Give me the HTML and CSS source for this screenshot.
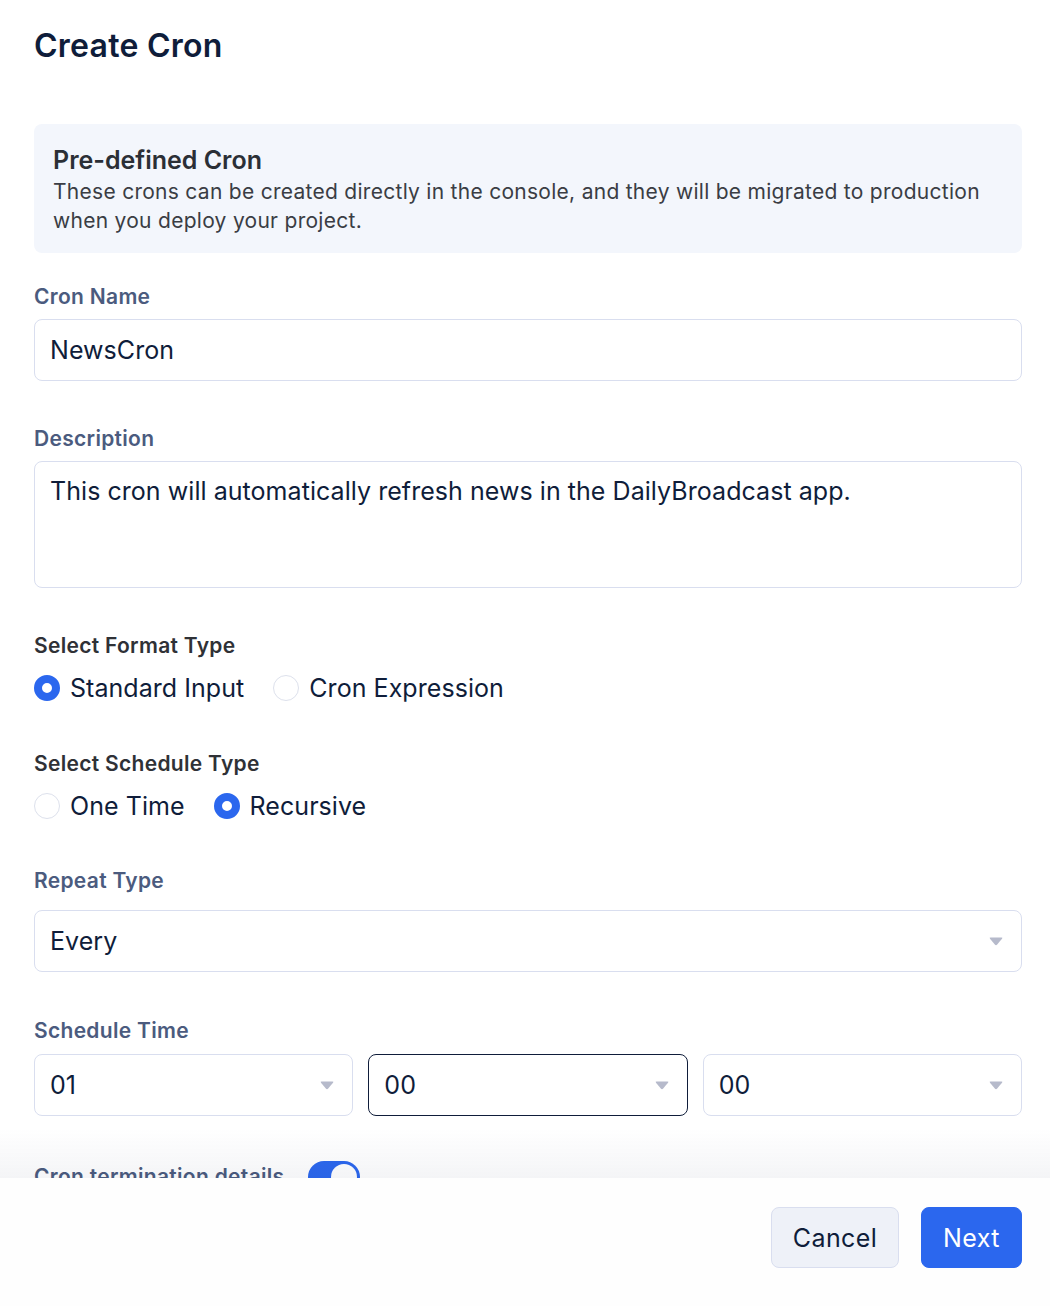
FILE: index.html
```html
<!DOCTYPE html>
<html lang="en">
<head>
<meta charset="utf-8">
<title>Create Cron</title>
<link rel="stylesheet" href="styles.css">
</head>
<body>
<main class="page">
  <h1 class="title">Create Cron</h1>

  <section class="info">
    <h2 class="info-title">Pre-defined Cron</h2>
    <p class="info-text">These crons can be created directly in the console, and they will be migrated to production when you deploy your project.</p>
  </section>

  <div class="field field-name">
    <label class="label">Cron Name</label>
    <div class="input">NewsCron</div>
  </div>

  <div class="field field-desc">
    <label class="label">Description</label>
    <div class="input textarea">This cron will automatically refresh news in the DailyBroadcast app.</div>
  </div>

  <div class="field field-format">
    <div class="label label-dark">Select Format Type</div>
    <div class="radios">
      <span class="radio checked"></span><span class="radio-text">Standard Input</span>
      <span class="radio"></span><span class="radio-text">Cron Expression</span>
    </div>
  </div>

  <div class="field field-schedule">
    <div class="label label-dark">Select Schedule Type</div>
    <div class="radios">
      <span class="radio"></span><span class="radio-text">One Time</span>
      <span class="radio checked"></span><span class="radio-text">Recursive</span>
    </div>
  </div>

  <div class="field field-repeat">
    <label class="label">Repeat Type</label>
    <div class="input select"><span>Every</span>
      <svg class="caret" width="14" height="9" viewBox="0 0 14 9"><path d="M1.5 0.5 H12.5 Q14 0.5 13 1.8 L8.2 7.6 Q7 9 5.8 7.6 L1 1.8 Q0 0.5 1.5 0.5 Z" fill="#b6bacb"/></svg>
    </div>
  </div>

  <div class="field field-time">
    <label class="label">Schedule Time</label>
    <div class="time-row">
      <div class="input select"><span>01</span>
        <svg class="caret" width="14" height="9" viewBox="0 0 14 9"><path d="M1.5 0.5 H12.5 Q14 0.5 13 1.8 L8.2 7.6 Q7 9 5.8 7.6 L1 1.8 Q0 0.5 1.5 0.5 Z" fill="#b6bacb"/></svg>
      </div>
      <div class="input select focused"><span>00</span>
        <svg class="caret" width="14" height="9" viewBox="0 0 14 9"><path d="M1.5 0.5 H12.5 Q14 0.5 13 1.8 L8.2 7.6 Q7 9 5.8 7.6 L1 1.8 Q0 0.5 1.5 0.5 Z" fill="#b6bacb"/></svg>
      </div>
      <div class="input select"><span>00</span>
        <svg class="caret" width="14" height="9" viewBox="0 0 14 9"><path d="M1.5 0.5 H12.5 Q14 0.5 13 1.8 L8.2 7.6 Q7 9 5.8 7.6 L1 1.8 Q0 0.5 1.5 0.5 Z" fill="#b6bacb"/></svg>
      </div>
    </div>
  </div>

  <div class="termination">
    <span class="label">Cron termination details</span>
    <span class="toggle"><span class="knob"></span></span>
  </div>
</main>

<footer class="footer">
  <button class="btn btn-cancel">Cancel</button>
  <button class="btn btn-next">Next</button>
</footer>
</body>
</html>
```

FILE: styles.css
```css
* { box-sizing: border-box; }

html, body {
  margin: 0;
  padding: 0;
  background: #ffffff;
  height: 1306px;
  overflow: hidden;
}

body {
  font-family: Inter, "Noto Sans", "Liberation Sans", sans-serif;
  color: #0f1d3a;
}

.page {
  padding: 26px 28px 0 34px;
  display: flex;
  flex-direction: column;
}

.title {
  margin: 0;
  font-size: 32px;
  line-height: 40px;
  font-weight: 600;
  color: #0f1d3a;
  letter-spacing: 0.25px;
}

.info {
  margin-top: 58px;
  background: #f3f6fc;
  border-radius: 8px;
  padding: 21px 19px 18px 19px;
}

.info-title {
  margin: 0;
  font-size: 25px;
  line-height: 30px;
  font-weight: 600;
  color: #2b2f36;
}

.info-text {
  margin: 2px 0 0 0;
  font-size: 21px;
  line-height: 29px;
  letter-spacing: 0.28px;
  color: #3a3d44;
}

.field { display: flex; flex-direction: column; }
.field-name { margin-top: 32px; }
.field-desc { margin-top: 46px; }
.field-format { margin-top: 46px; }
.field-schedule { margin-top: 49px; }
.field-repeat { margin-top: 48px; }
.field-time { margin-top: 47px; }

.label {
  font-size: 21px;
  line-height: 24px;
  font-weight: 600;
  letter-spacing: 0.3px;
  color: #4b5b7e;
}

.label-dark { color: #2f3136; }

.field .input { margin-top: 10px; }
.field-repeat .input { margin-top: 17px; }

.input {
  height: 62px;
  border: 1px solid #d9deef;
  border-radius: 8px;
  padding: 0 15px;
  display: flex;
  align-items: center;
  font-size: 25px;
  letter-spacing: 0.05px;
  color: #0f1d3a;
  background: #fff;
}

.textarea {
  height: 127px;
  align-items: flex-start;
  padding-top: 13px;
  line-height: 32px;
}

.select {
  justify-content: space-between;
  padding-right: 18px;
}

.select.focused { border-color: #0f1d3a; }

.caret { display: block; }

.time-row {
  margin-top: 11px;
  display: grid;
  grid-template-columns: 1fr 1fr 1fr;
  gap: 15px;
}

.time-row .input { margin-top: 0; }

.radios {
  margin-top: 15px;
  height: 30px;
  display: flex;
  align-items: center;
}

.radio {
  width: 26px;
  height: 26px;
  border-radius: 50%;
  border: 1px solid #dde1ec;
  background: #fff;
  flex: none;
}

.radio.checked {
  border: 8px solid #2b67ee;
}

.radio-text {
  font-size: 25px;
  letter-spacing: 0.05px;
  color: #0f1d3a;
  margin-left: 10px;
  margin-right: 29px;
}

.termination {
  margin-top: 45px;
  display: flex;
  align-items: center;
  gap: 24px;
}

.toggle {
  width: 52px;
  height: 32px;
  border-radius: 16px;
  background: #2b67ee;
  display: flex;
  align-items: center;
  justify-content: flex-end;
  padding: 0 3px;
}

.knob {
  width: 26px;
  height: 26px;
  border-radius: 50%;
  background: #fff;
}

.footer {
  position: fixed;
  left: 0;
  right: 0;
  bottom: 0;
  height: 128px;
  background: #fefefe;
  display: flex;
  justify-content: flex-end;
  align-items: flex-start;
  gap: 22px;
  padding: 29px 28px 0 0;
}

.footer::before {
  content: "";
  position: absolute;
  left: 0;
  right: 0;
  top: -50px;
  height: 50px;
  background: linear-gradient(to bottom, rgba(40, 50, 90, 0), rgba(40, 50, 90, 0.05));
  pointer-events: none;
}

.btn {
  height: 61px;
  border-radius: 8px;
  font-family: inherit;
  font-size: 25px;
  letter-spacing: 0.4px;
  padding: 0;
  cursor: pointer;
}

.btn-cancel {
  width: 128px;
  background: #eef1f8;
  border: 1px solid #d9deef;
  color: #0f1d3a;
}

.btn-next {
  width: 101px;
  background: #2b67ee;
  border: 1px solid #2b67ee;
  color: #ffffff;
}
```
